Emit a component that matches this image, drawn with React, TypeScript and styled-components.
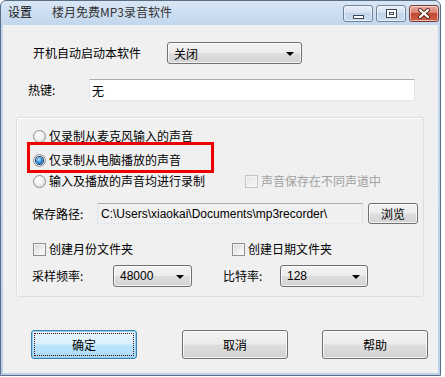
import React from 'react';
import styled, { createGlobalStyle, css } from 'styled-components';

const GlobalStyle = createGlobalStyle`
  html, body {
    margin: 0;
    padding: 0;
    background: #ffffff;
  }
  body {
    font-family: "Noto Sans CJK SC", "Liberation Sans", sans-serif;
    font-size: 12px;
    color: #000;
  }
`;

const Window = styled.div`
  box-sizing: border-box;
  width: 441px;
  height: 376px;
  display: flex;
  flex-direction: column;
  border: 1px solid #5a6e88;
  border-radius: 6px 6px 0 0;
  background: linear-gradient(180deg, #d9e6f4 0px, #c2d7ed 24px, #b9d1ea 100%);
  overflow: hidden;
`;

const TitleBar = styled.div`
  height: 24px;
  flex: none;
  display: flex;
  align-items: flex-start;
  padding-left: 7px;
`;

const TitleText = styled.span<{ $dim?: boolean }>`
  margin-top: 3px;
  font-size: 12px;
  line-height: 16px;
  color: ${(p) => (p.$dim ? '#333' : '#111')};
  margin-right: 20px;
`;

const Caption = styled.div`
  margin-left: auto;
  margin-top: 4px;
  margin-right: 1px;
  display: flex;
  gap: 3px;
`;

const CaptionButton = styled.div<{ $close?: boolean }>`
  box-sizing: border-box;
  width: 30px;
  height: 17px;
  border-radius: 3px;
  display: flex;
  align-items: center;
  justify-content: center;
  border: 1px solid ${(p) => (p.$close ? '#7a3b32' : '#6f839c')};
  box-shadow: inset 0 0 0 1px rgba(255, 255, 255, 0.55);
  background: ${(p) =>
    p.$close
      ? 'linear-gradient(180deg, #e9a99c 0%, #d9826f 45%, #c24a33 50%, #cf5f44 100%)'
      : 'linear-gradient(180deg, #e6eef8 0%, #d6e2f1 45%, #c3d4ea 50%, #cddcef 100%)'};
`;

const MinGlyph = styled.span`
  box-sizing: border-box;
  width: 11px;
  height: 4px;
  margin-top: 6px;
  border: 1px solid #3a4452;
  background: #fff;
`;

const MaxGlyph = styled.span`
  box-sizing: border-box;
  width: 11px;
  height: 9px;
  border: 1px solid #3a4452;
  background: #fff;
  display: flex;
  align-items: center;
  justify-content: center;
  &::after {
    content: '';
    width: 5px;
    height: 3px;
    border: 1px solid #3a4452;
    box-sizing: border-box;
  }
`;

const Client = styled.div`
  flex: 1;
  margin: 0 2px 2px 2px;
  background: #f0f0f0;
  display: flex;
  flex-direction: column;
`;

const Row = styled.div<{ $top: number; $left: number }>`
  display: flex;
  align-items: center;
  margin-top: ${(p) => p.$top}px;
  padding-left: ${(p) => p.$left}px;
`;

const Label = styled.span<{ $w: number }>`
  width: ${(p) => p.$w}px;
  flex: none;
  white-space: nowrap;
  line-height: 16px;
`;

const raised = css`
  box-sizing: border-box;
  border: 1px solid #707070;
  border-radius: 3px;
  background: linear-gradient(180deg, #f3f3f3 0%, #ececec 48%, #dedede 52%, #d2d2d2 100%);
  box-shadow: inset 0 0 0 1px rgba(255, 255, 255, 0.7);
`;

const Combo = styled.div<{ $w: number; $latin?: boolean }>`
  ${raised}
  width: ${(p) => p.$w}px;
  height: 22px;
  display: flex;
  align-items: center;
  padding: 0 0 0 6px;
  font-family: ${(p) =>
    p.$latin ? '"Liberation Sans", sans-serif' : '"Noto Sans CJK SC", sans-serif'};
  font-size: 12px;
  position: relative;
  &::after {
    content: '';
    position: absolute;
    right: 7px;
    top: 9px;
    border-left: 4px solid transparent;
    border-right: 4px solid transparent;
    border-top: 4px solid #000;
  }
`;

const TextBox = styled.div<{ $w: number; $h?: number; $readonly?: boolean; $latin?: boolean }>`
  box-sizing: border-box;
  width: ${(p) => p.$w}px;
  height: ${(p) => p.$h ?? 22}px;
  display: flex;
  align-items: center;
  padding-left: ${(p) => (p.$latin ? 3 : 2)}px;
  background: ${(p) => (p.$readonly ? '#f0f0f0' : '#ffffff')};
  border: 1px solid #e2e3ea;
  border-top-color: #abadb3;
  border-bottom-color: #e3e9ef;
  font-family: ${(p) =>
    p.$latin ? '"Liberation Sans", sans-serif' : '"Noto Sans CJK SC", sans-serif'};
  font-size: 12px;
  white-space: nowrap;
`;

const GroupBox = styled.div`
  box-sizing: border-box;
  position: relative;
  margin: 16px 0 0 13px;
  width: 408px;
  height: 180px;
  border: 1px solid #d5dfe5;
  border-radius: 3px;
  box-shadow: inset 1px 1px 0 #ffffff;
  padding: 8px 0 0 15px;
  display: flex;
  flex-direction: column;
`;

const GroupRow = styled.div<{ $top: number; $h?: number; $indent?: number }>`
  display: flex;
  align-items: center;
  height: ${(p) => p.$h ?? 20}px;
  margin-top: ${(p) => p.$top}px;
  padding-left: ${(p) => p.$indent ?? 0}px;
`;

const Option = styled.label<{ $w?: number; $disabled?: boolean }>`
  display: flex;
  align-items: center;
  gap: 3px;
  width: ${(p) => (p.$w ? `${p.$w}px` : 'auto')};
  flex: none;
  white-space: nowrap;
  color: ${(p) => (p.$disabled ? '#a0a0a0' : '#000')};
  line-height: 16px;
`;

const RadioDot = styled.span<{ $checked?: boolean }>`
  box-sizing: border-box;
  width: 13px;
  height: 13px;
  border-radius: 50%;
  border: 1px solid #8f8f8f;
  background: radial-gradient(circle at 40% 35%, #ffffff 0%, #f2f2f2 40%, #d4d4d4 100%);
  display: flex;
  align-items: center;
  justify-content: center;
  &::after {
    content: '';
    display: ${(p) => (p.$checked ? 'block' : 'none')};
    width: 7px;
    height: 7px;
    border-radius: 50%;
    background: radial-gradient(circle at 40% 35%, #b9e6ff 0%, #2e8fd6 50%, #0b4f8f 100%);
    box-shadow: 0 0 0 1px #1a3a66;
  }
`;

const CheckBox = styled.span<{ $disabled?: boolean }>`
  box-sizing: border-box;
  width: 13px;
  height: 13px;
  border: 1px solid ${(p) => (p.$disabled ? '#c4c4c4' : '#8f8f8f')};
  background: ${(p) =>
    p.$disabled
      ? 'linear-gradient(135deg, #e6e6e6 0%, #f7f7f7 100%)'
      : 'linear-gradient(135deg, #d6d6d6 0%, #f4f4f4 70%, #ffffff 100%)'};
  box-shadow: inset 0 0 0 1px #f4f4f4;
`;

const Highlight = styled.div`
  position: absolute;
  left: 10px;
  top: 24px;
  width: 187px;
  height: 31px;
  box-sizing: border-box;
  border: 3px solid #ee0000;
  pointer-events: none;
`;

const PushButton = styled.div<{ $w: number; $h: number; $default?: boolean }>`
  ${raised}
  width: ${(p) => p.$w}px;
  height: ${(p) => p.$h}px;
  display: flex;
  align-items: center;
  justify-content: center;
  font-size: 12px;
  ${(p) =>
    p.$default &&
    css`
      border-color: #3c7fb1;
      background: linear-gradient(180deg, #eaf6fd 0%, #d9f0fc 48%, #bee6fd 52%, #a7d9f5 100%);
      box-shadow: inset 0 0 0 1px #8fd0f4;
      outline: 1px dotted #4a1010;
      outline-offset: -4px;
    `}
`;

const ButtonRow = styled.div`
  display: flex;
  margin-top: 33px;
  padding-left: 28px;
  & > :nth-child(2) {
    margin-left: 45px;
  }
  & > :nth-child(3) {
    margin-left: 34px;
  }
`;

function CloseGlyph() {
  return (
    <svg width="14" height="11" viewBox="0 0 14 11">
      <path d="M3 2 L11 9 M11 2 L3 9" stroke="#5a2a22" strokeWidth="4" strokeLinecap="round" />
      <path d="M3 2 L11 9 M11 2 L3 9" stroke="#ffffff" strokeWidth="2.2" strokeLinecap="round" />
    </svg>
  );
}

export default function App() {
  return (
    <>
      <GlobalStyle />
      <Window>
        <TitleBar>
          <TitleText>设置</TitleText>
          <TitleText $dim>楼月免费MP3录音软件</TitleText>
          <Caption>
            <CaptionButton>
              <MinGlyph />
            </CaptionButton>
            <CaptionButton>
              <MaxGlyph />
            </CaptionButton>
            <CaptionButton $close>
              <CloseGlyph />
            </CaptionButton>
          </Caption>
        </TitleBar>
        <Client>
          <Row $top={17} $left={30}>
            <Label $w={134}>开机自动启动本软件</Label>
            <Combo $w={135}>关闭</Combo>
          </Row>
          <Row $top={15} $left={25}>
            <Label $w={61}>热键:</Label>
            <TextBox $w={326}>无</TextBox>
          </Row>

          <GroupBox>
            <GroupRow $top={0} $indent={1}>
              <Option>
                <RadioDot />
                仅录制从麦克风输入的声音
              </Option>
            </GroupRow>
            <GroupRow $top={4} $indent={1}>
              <Option>
                <RadioDot $checked />
                仅录制从电脑播放的声音
              </Option>
            </GroupRow>
            <GroupRow $top={1} $indent={1}>
              <Option $w={212}>
                <RadioDot />
                输入及播放的声音均进行录制
              </Option>
              <Option $disabled>
                <CheckBox $disabled />
                声音保存在不同声道中
              </Option>
            </GroupRow>
            <GroupRow $top={12} $h={21}>
              <Label $w={65}>保存路径:</Label>
              <TextBox $w={266} $h={21} $readonly $latin>
                C:\Users\xiaokai\Documents\mp3recorder\
              </TextBox>
              <PushButton $w={50} $h={21} style={{ marginLeft: 5 }}>
                浏览
              </PushButton>
            </GroupRow>
            <GroupRow $top={15} $indent={1}>
              <Option $w={199}>
                <CheckBox />
                创建月份文件夹
              </Option>
              <Option>
                <CheckBox />
                创建日期文件夹
              </Option>
            </GroupRow>
            <GroupRow $top={6} $h={22}>
              <Label $w={81}>采样频率:</Label>
              <Combo $w={79} $latin>
                48000
              </Combo>
              <Label $w={57} style={{ marginLeft: 31 }}>
                比特率:
              </Label>
              <Combo $w={88} $latin>
                128
              </Combo>
            </GroupRow>
            <Highlight />
          </GroupBox>

          <ButtonRow>
            <PushButton $w={106} $h={29} $default>
              确定
            </PushButton>
            <PushButton $w={106} $h={29}>
              取消
            </PushButton>
            <PushButton $w={106} $h={29}>
              帮助
            </PushButton>
          </ButtonRow>
        </Client>
      </Window>
    </>
  );
}
